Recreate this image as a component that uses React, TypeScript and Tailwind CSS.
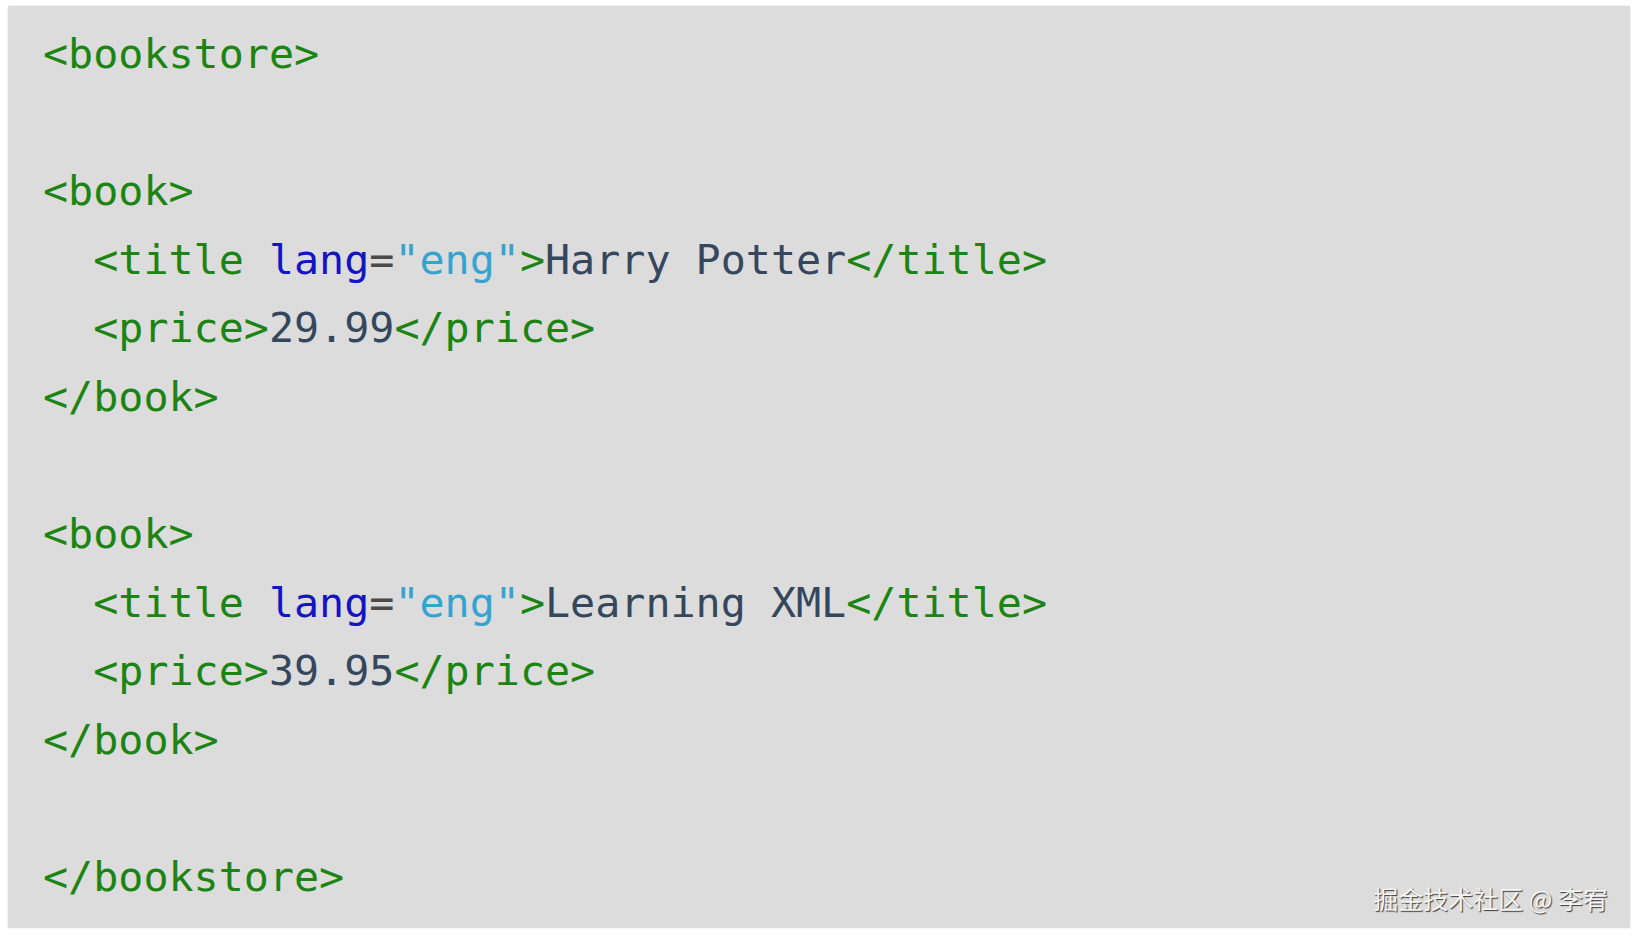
const tag = "text-[#1b8412]";
const attr = "text-[#1414c0]";
const str = "text-[#36a3cf]";
const eq = "text-[#4a4a4a]";
const val = "text-[#34475c]";

const Tag = ({ children }: { children: string }) => (
  <span className={tag}>{children}</span>
);

const TitleLine = ({ text }: { text: string }) => (
  <div className="whitespace-pre">
    {"  "}
    <Tag>{"<title "}</Tag>
    <span className={attr}>lang</span>
    <span className={eq}>=</span>
    <span className={str}>"eng"</span>
    <Tag>{">"}</Tag>
    <span className={val}>{text}</span>
    <Tag>{"</title>"}</Tag>
  </div>
);

const PriceLine = ({ price }: { price: string }) => (
  <div className="whitespace-pre">
    {"  "}
    <Tag>{"<price>"}</Tag>
    <span className={val}>{price}</span>
    <Tag>{"</price>"}</Tag>
  </div>
);

const Blank = () => <div className="h-[68.6px]" />;

const App = () => {
  return (
    <div className="min-h-screen bg-white pt-[6px] pl-[8px]">
      <div className="relative w-[1622px] h-[922px] bg-[#dcdcdc] shadow-[0_0_2px_rgba(0,0,0,0.12)]">
        <div className="pl-[35px] pt-[14px] font-['DejaVu_Sans_Mono',monospace] text-[41.7px] leading-[68.6px]">
          <div>
            <Tag>{"<bookstore>"}</Tag>
          </div>
          <Blank />
          <div>
            <Tag>{"<book>"}</Tag>
          </div>
          <TitleLine text="Harry Potter" />
          <PriceLine price="29.99" />
          <div>
            <Tag>{"</book>"}</Tag>
          </div>
          <Blank />
          <div>
            <Tag>{"<book>"}</Tag>
          </div>
          <TitleLine text="Learning XML" />
          <PriceLine price="39.95" />
          <div>
            <Tag>{"</book>"}</Tag>
          </div>
          <Blank />
          <div>
            <Tag>{"</bookstore>"}</Tag>
          </div>
        </div>
        <div className="absolute right-[22px] bottom-[14px] whitespace-pre font-['Noto_Sans_CJK_SC',sans-serif] text-[25px] leading-[32px] text-[#f4f4f4] [text-shadow:1px_1px_1px_#3a3a3a]">
          {"掘金技术社区 @ 李宥"}
        </div>
      </div>
    </div>
  );
};

export default App;
